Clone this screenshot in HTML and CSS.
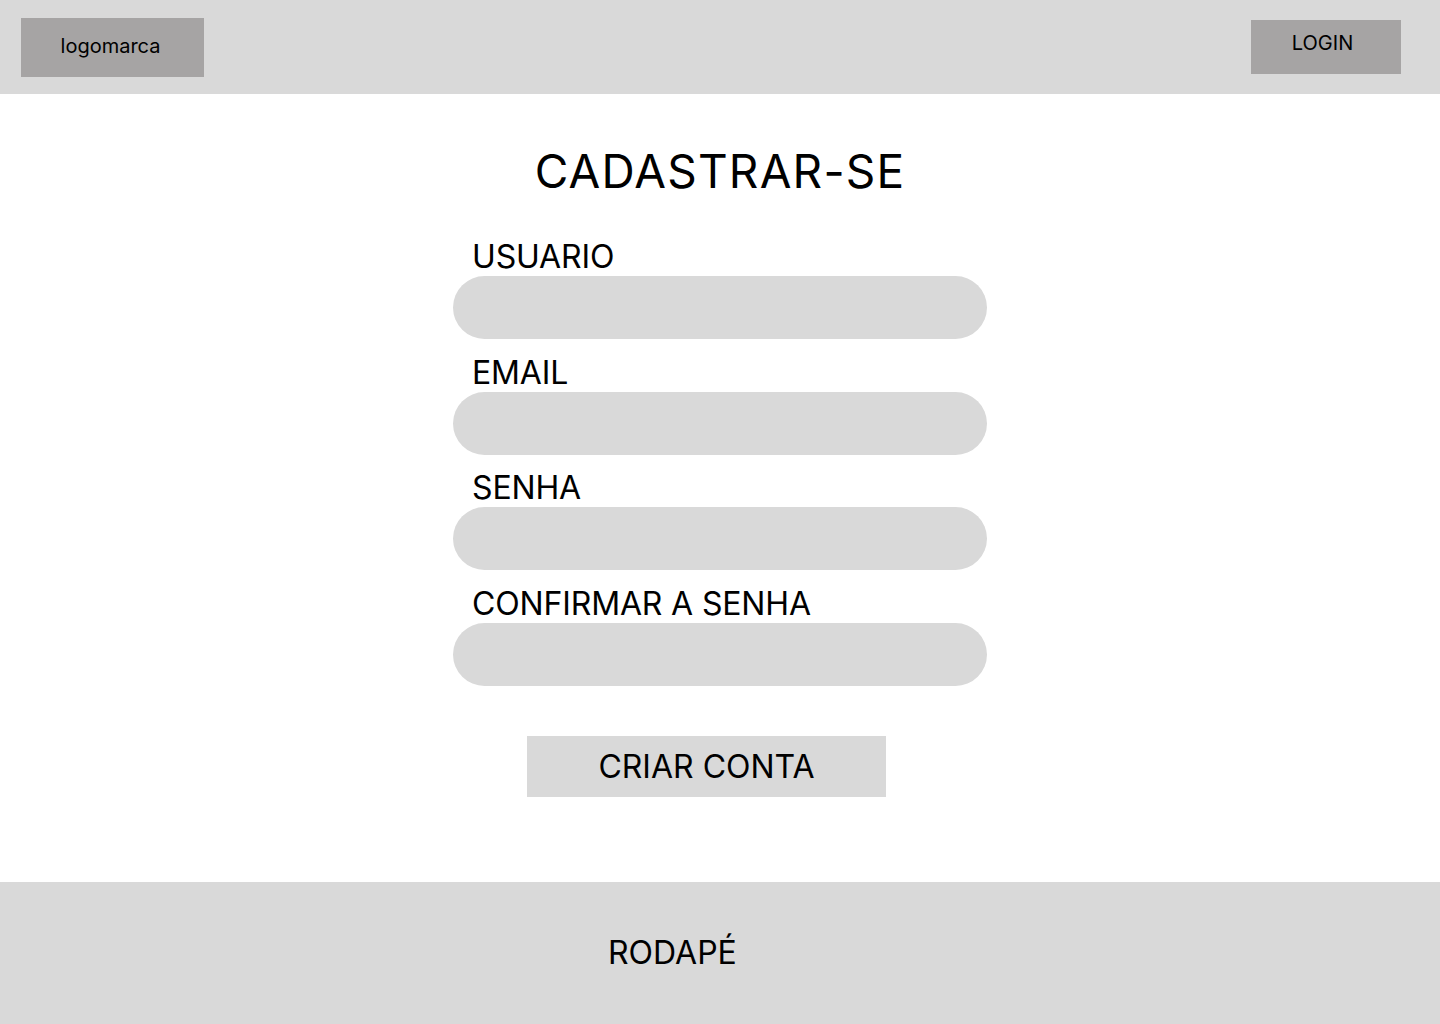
FILE: index.html
```html
<!DOCTYPE html>
<html lang="pt-BR">
<head>
<meta charset="utf-8">
<title>Cadastrar-se</title>
<link rel="stylesheet" href="styles.css">
</head>
<body>
<header class="topbar">
  <div class="logo">logomarca</div>
  <a class="login-btn" href="#">LOGIN</a>
</header>
<main class="content">
  <h1 class="title">CADASTRAR-SE</h1>
  <form class="form">
    <div class="field">
      <label class="label">USUARIO</label>
      <input class="input" type="text">
    </div>
    <div class="field">
      <label class="label">EMAIL</label>
      <input class="input" type="email">
    </div>
    <div class="field">
      <label class="label">SENHA</label>
      <input class="input" type="password">
    </div>
    <div class="field">
      <label class="label">CONFIRMAR A SENHA</label>
      <input class="input" type="password">
    </div>
    <button class="submit" type="button">CRIAR CONTA</button>
  </form>
</main>
<footer class="footer">
  <span class="footer-text">RODAPÉ</span>
</footer>
</body>
</html>
```

FILE: styles.css
```css
* {
  box-sizing: border-box;
}

html, body {
  margin: 0;
  padding: 0;
}

body {
  font-family: Inter, "Noto Sans", sans-serif;
  color: #000;
  background: #fff;
  min-height: 1024px;
  display: flex;
  flex-direction: column;
}

.topbar {
  height: 94px;
  background: #d9d9d9;
  display: flex;
  justify-content: space-between;
  align-items: flex-start;
  padding: 0 39px 0 21px;
}

.logo {
  margin-top: 18px;
  width: 183px;
  height: 59px;
  background: #a6a4a4;
  font-size: 20px;
  display: flex;
  align-items: center;
  justify-content: center;
  padding: 0 4px 3px 0;
}

.login-btn {
  margin-top: 20px;
  width: 150px;
  height: 54px;
  background: #a6a4a4;
  font-size: 20px;
  color: #000;
  text-decoration: none;
  display: flex;
  justify-content: center;
  padding-top: 11px;
  padding-right: 7px;
}

.content {
  flex: 1;
  display: flex;
  flex-direction: column;
  align-items: center;
}

.title {
  margin: 49px 0 0;
  font-size: 46px;
  font-weight: 400;
  line-height: 56px;
  letter-spacing: 1.2px;
}

.form {
  margin-top: 38px;
  width: 534px;
  display: flex;
  flex-direction: column;
  gap: 13.5px;
}

.field {
  display: flex;
  flex-direction: column;
}

.label {
  font-size: 32px;
  line-height: 39px;
  padding-left: 19px;
  letter-spacing: -0.15px;
}

.input {
  height: 63px;
  border: none;
  border-radius: 32px;
  background: #d9d9d9;
  outline: none;
  font-family: inherit;
  font-size: 24px;
  padding: 0 24px;
}

.submit {
  align-self: center;
  margin: 37px 0 0 -27px;
  width: 359px;
  height: 61px;
  border: none;
  background: #d9d9d9;
  font-family: inherit;
  font-size: 32px;
  color: #000;
  padding: 0;
}

.footer {
  height: 142px;
  background: #d9d9d9;
  display: flex;
  align-items: center;
  padding-left: 608px;
}

.footer-text {
  font-size: 32px;
  padding-bottom: 2px;
}
```
